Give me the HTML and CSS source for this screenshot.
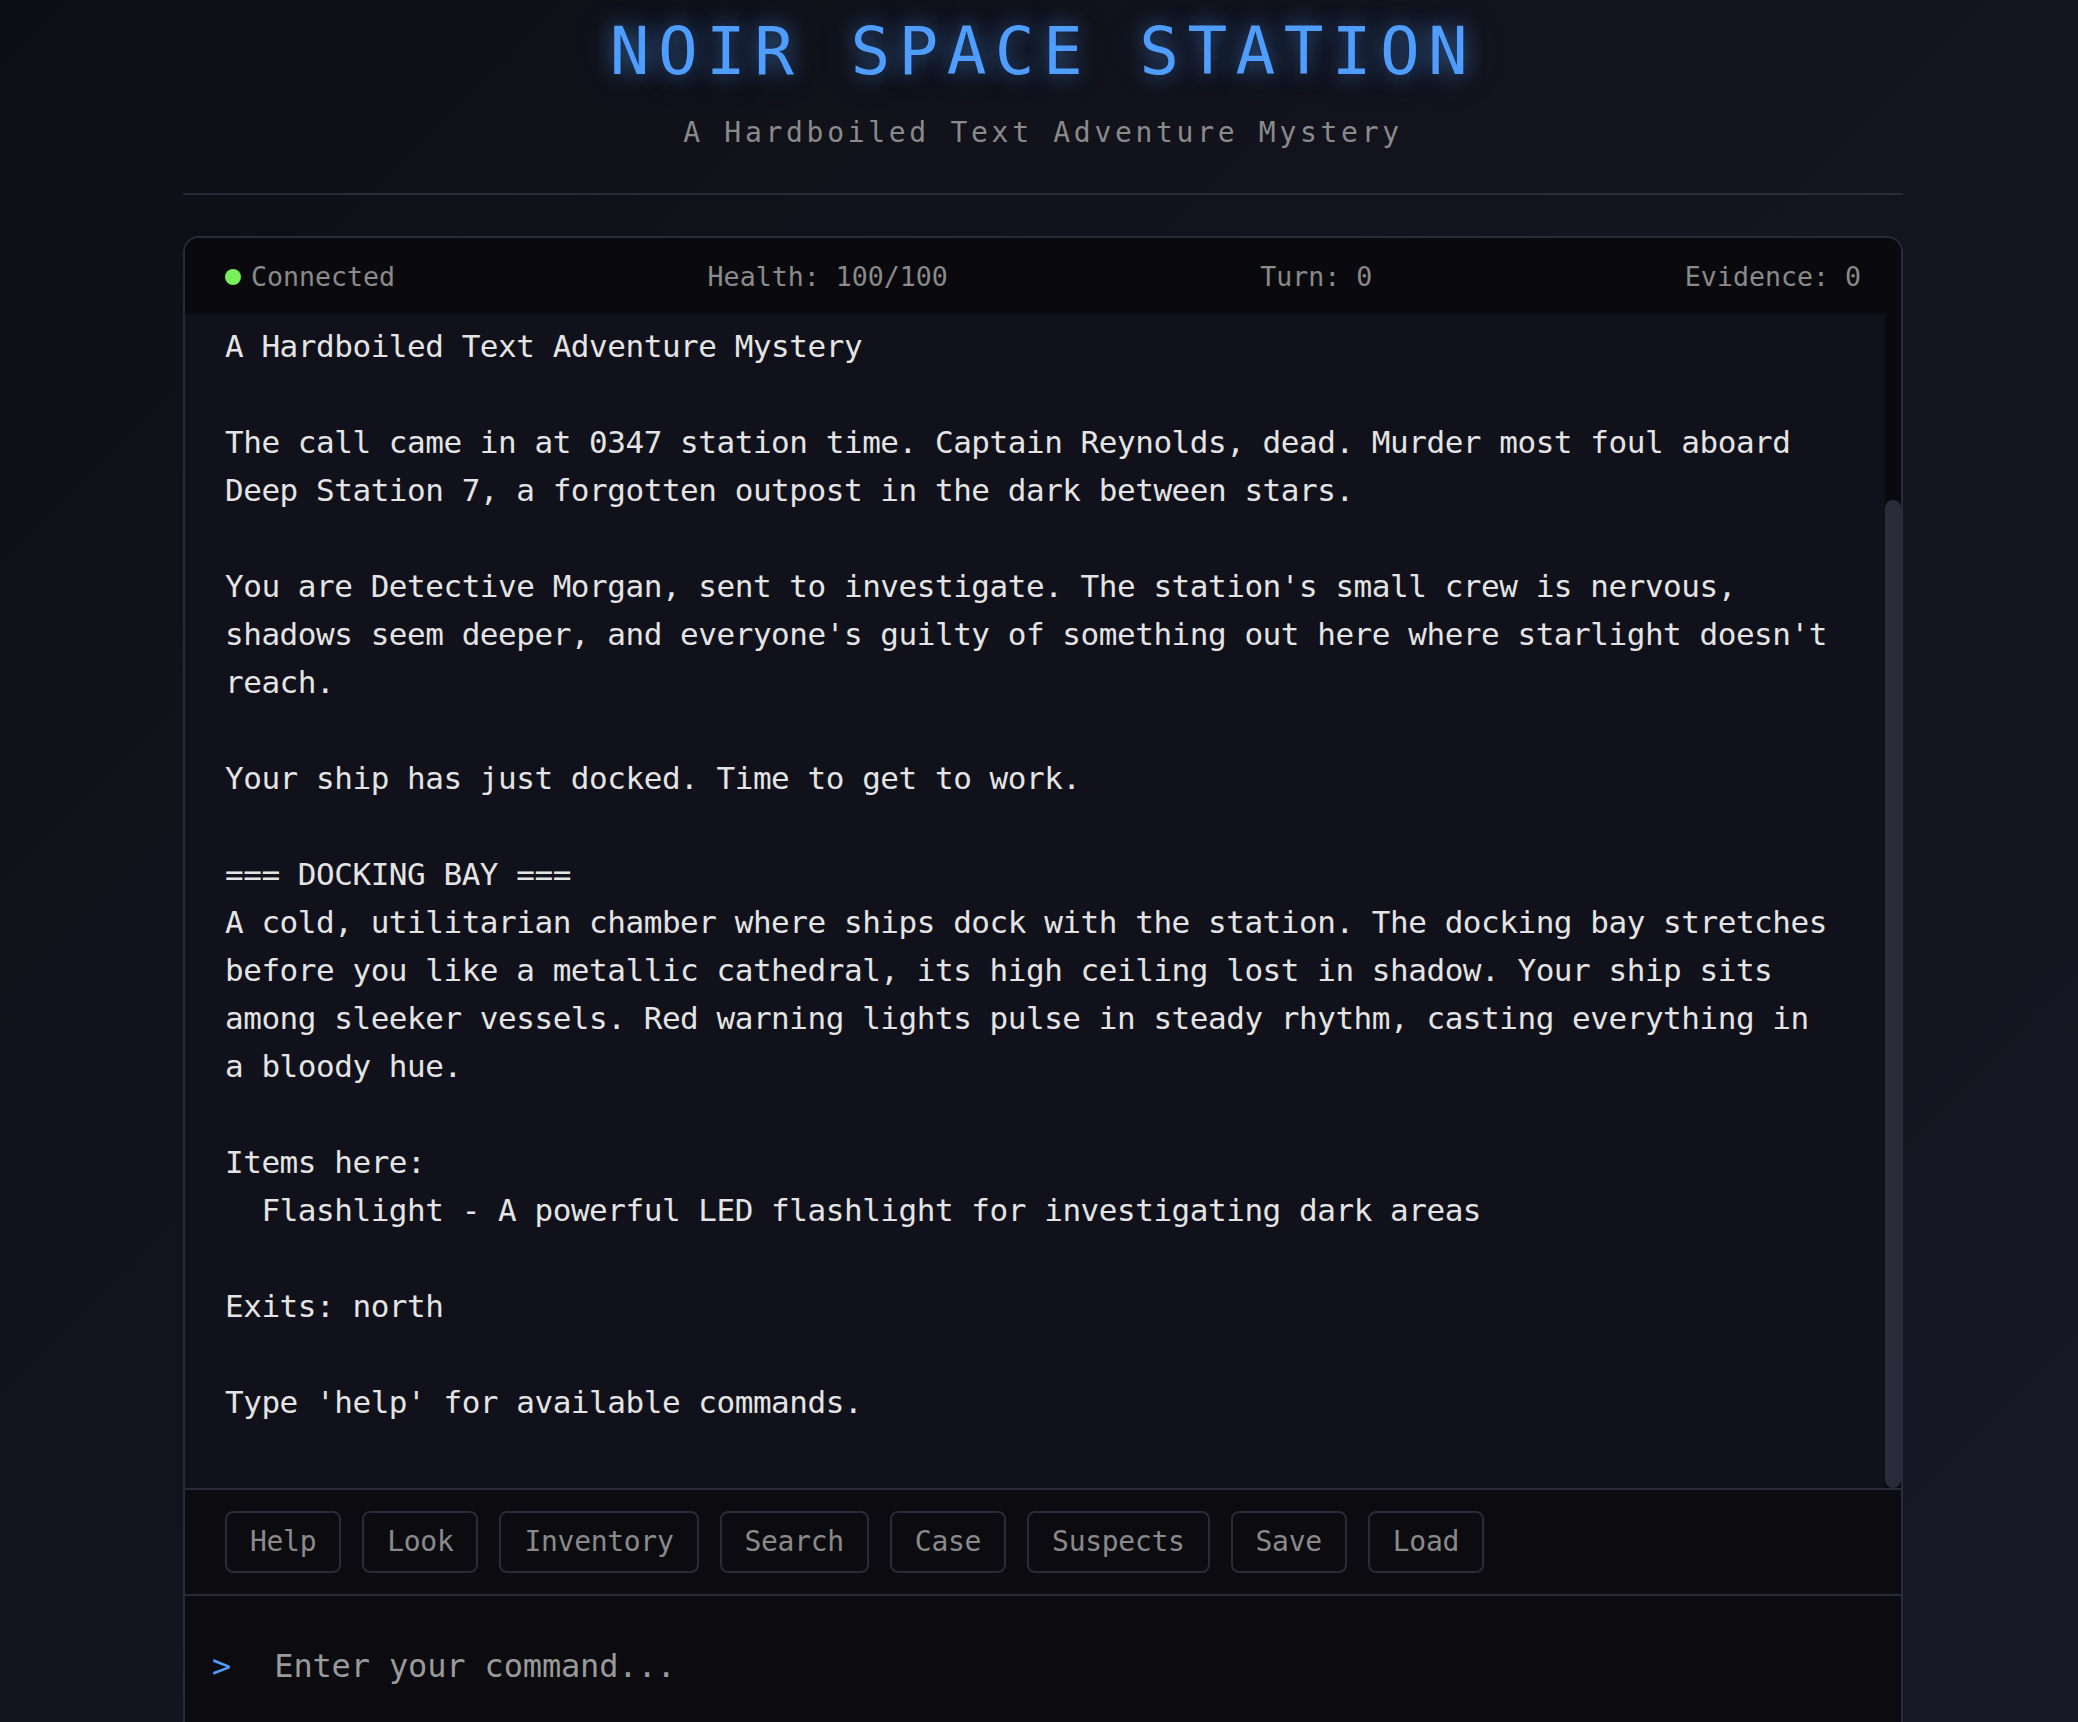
FILE: index.html
```html
<!DOCTYPE html>
<html lang="en">
<head>
<meta charset="utf-8">
<title>Noir Space Station</title>
<link rel="stylesheet" href="styles.css">
</head>
<body>
<div class="app">
  <header class="header">
    <h1 class="title">NOIR SPACE STATION</h1>
    <p class="subtitle">A Hardboiled Text Adventure Mystery</p>
  </header>
  <main class="terminal">
    <div class="status-bar">
      <div class="status-item status-conn"><span class="dot"></span>Connected</div>
      <div class="status-item">Health: 100/100</div>
      <div class="status-item">Turn: 0</div>
      <div class="status-item">Evidence: 0</div>
    </div>
    <div class="output-wrap">
      <div class="output">
<div class="message">A Hardboiled Text Adventure Mystery

The call came in at 0347 station time. Captain Reynolds, dead. Murder most foul aboard
Deep Station 7, a forgotten outpost in the dark between stars.

You are Detective Morgan, sent to investigate. The station's small crew is nervous,
shadows seem deeper, and everyone's guilty of something out here where starlight doesn't
reach.

Your ship has just docked. Time to get to work.

=== DOCKING BAY ===
A cold, utilitarian chamber where ships dock with the station. The docking bay stretches
before you like a metallic cathedral, its high ceiling lost in shadow. Your ship sits
among sleeker vessels. Red warning lights pulse in steady rhythm, casting everything in
a bloody hue.

Items here:
  Flashlight - A powerful LED flashlight for investigating dark areas

Exits: north

Type 'help' for available commands.</div>
      </div>
      <div class="scrollbar" aria-hidden="true"><div class="scroll-thumb"></div></div>
    </div>
    <div class="quick-actions">
      <button class="qa-btn">Help</button>
      <button class="qa-btn">Look</button>
      <button class="qa-btn">Inventory</button>
      <button class="qa-btn">Search</button>
      <button class="qa-btn">Case</button>
      <button class="qa-btn">Suspects</button>
      <button class="qa-btn">Save</button>
      <button class="qa-btn">Load</button>
    </div>
    <div class="input-row">
      <span class="prompt">&gt;</span>
      <input class="cmd" type="text" placeholder="Enter your command...">
    </div>
  </main>
</div>
</body>
</html>
```
FILE: styles.css
```css
html, body {
  margin: 0;
  height: 100%;
  overflow: hidden;
}

body {
  box-sizing: border-box;
  padding-left: 8px;
  background: linear-gradient(135deg, #0e0f15 0%, #13141e 50%, #171826 100%);
  font-family: "DejaVu Sans Mono", "Liberation Mono", monospace;
}

.app {
  max-width: 1720px;
  margin: 0 auto;
}

.header {
  text-align: center;
  padding-top: 19px;
  padding-bottom: 46px;
  border-bottom: 2px solid #2a2a3a;
}

.title {
  margin: 0 0 34px;
  font-size: 66px;
  line-height: 66px;
  font-weight: 400;
  letter-spacing: 8.4px;
  color: #4f9dff;
  text-shadow: 0 0 20px rgba(79, 157, 255, 0.5), 0 0 40px rgba(79, 157, 255, 0.25);
}

.subtitle {
  margin: 0;
  font-size: 28px;
  line-height: 28px;
  letter-spacing: 3.7px;
  color: #8a8a8a;
}

.terminal {
  margin-top: 41px;
  border: 2px solid #2a2a3a;
  border-radius: 16px;
  overflow: hidden;
  background: #0b0b10;
}

.status-bar {
  display: flex;
  justify-content: space-between;
  align-items: center;
  padding: 21px 40px 20px;
  font-size: 26.6px;
  line-height: 35px;
  color: #8a8a8a;
  background: #0a0a0e;
}

.status-conn {
  display: flex;
  align-items: center;
}

.dot {
  display: inline-block;
  width: 16px;
  height: 16px;
  border-radius: 50%;
  background: #78f05a;
  margin-right: 10px;
}

.output-wrap {
  position: relative;
}

.output {
  height: 1174px;
  box-sizing: border-box;
  padding: 8px 56px 0 40px;
  overflow: hidden;
  background: #10111a;
}

.message {
  white-space: pre-wrap;
  font-size: 31px;
  line-height: 48px;
  letter-spacing: -0.46px;
  color: #e4e4e4;
}

.scrollbar {
  position: absolute;
  top: 0;
  right: 0;
  bottom: 0;
  width: 16px;
  background: #0a0a0e;
}

.scroll-thumb {
  position: absolute;
  left: 0;
  right: 0;
  bottom: 0;
  height: 988px;
  border-radius: 8px;
  background: #2b2b39;
}

.quick-actions {
  display: flex;
  gap: 21px;
  padding: 21px 40px;
  border-top: 2px solid #2a2a38;
  border-bottom: 2px solid #2a2a38;
  background: #0b0b10;
}

.qa-btn {
  font-family: inherit;
  font-size: 28px;
  line-height: 34px;
  letter-spacing: -0.3px;
  padding: 12px 23px;
  border: 2px solid #2a2a38;
  border-radius: 8px;
  background: transparent;
  color: #8a8a8a;
}

.input-row {
  display: flex;
  align-items: center;
  padding: 50px 30px 60px 27px;
  background: #0b0b10;
}

.prompt {
  color: #4f9dff;
  font-size: 32px;
  line-height: 40px;
  margin-right: 43px;
}

.cmd {
  flex: 1;
  padding: 0;
  border: none;
  outline: none;
  background: transparent;
  font-family: inherit;
  font-size: 32px;
  line-height: 40px;
  letter-spacing: -0.15px;
  color: #e0e0e0;
}

.cmd::placeholder {
  color: #9a9a9a;
}
```
